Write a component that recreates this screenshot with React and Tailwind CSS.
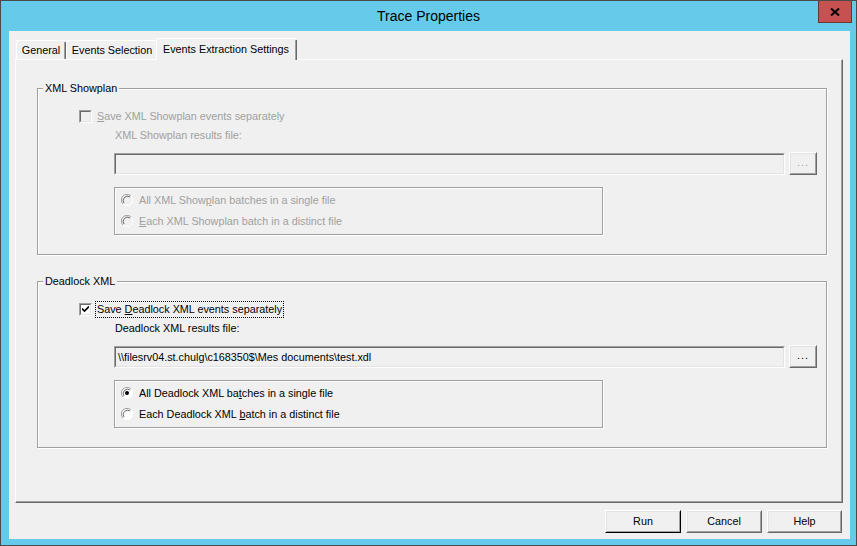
import React from 'react';

const Checkbox = ({ checked, disabled }) => (
  <div className="w-[13px] h-[13px] shrink-0 border border-t-[#a0a0a0] border-l-[#a0a0a0] border-r-white border-b-white">
    <div
      className={`w-full h-full border border-t-[#696969] border-l-[#696969] border-r-[#e3e3e3] border-b-[#e3e3e3] flex items-center justify-center ${
        disabled ? 'bg-[#f0f0f0]' : 'bg-white'
      }`}
    >
      {checked && (
        <svg width="7" height="7" viewBox="0 0 7 7">
          <path d="M0 2.5 L2.5 5 L7 0.5" stroke="#000" strokeWidth="1.6" fill="none" />
        </svg>
      )}
    </div>
  </div>
);

const Radio = ({ checked, disabled }) => (
  <svg width="12" height="12" viewBox="0 0 12 12" className="shrink-0">
    <circle cx="6" cy="6" r="5.5" fill={disabled ? '#f0f0f0' : '#fff'} />
    <path d="M10 2 A5.5 5.5 0 0 0 2 10" stroke="#a0a0a0" strokeWidth="1" fill="none" />
    <path d="M9 3 A4.3 4.3 0 0 0 3 9" stroke="#696969" strokeWidth="1" fill="none" />
    <path d="M2 10 A5.5 5.5 0 0 0 10 2" stroke="#fff" strokeWidth="1" fill="none" />
    {checked && <circle cx="6" cy="6" r="2" fill="#000" />}
  </svg>
);

const Sunken = ({ className, children }) => (
  <div className={`border border-t-[#a0a0a0] border-l-[#a0a0a0] border-r-white border-b-white ${className}`}>
    <div className="w-full h-full border border-t-[#696969] border-l-[#696969] border-r-[#e3e3e3] border-b-[#e3e3e3] bg-[#f0f0f0] flex items-center">
      {children}
    </div>
  </div>
);

const Button = ({ children, className = '', disabled }) => (
  <div className={`border border-t-white border-l-white border-r-[#696969] border-b-[#696969] ${className}`}>
    <div
      className={`w-full h-full border border-t-[#e3e3e3] border-l-[#e3e3e3] border-r-[#a0a0a0] border-b-[#a0a0a0] bg-[#f0f0f0] flex items-center justify-center ${
        disabled ? 'text-[#a0a0a0]' : 'text-black'
      }`}
    >
      {children}
    </div>
  </div>
);

const GroupBox = ({ title, children }) => (
  <div className="relative h-[167px] border border-[#a0a0a0] shadow-[inset_1px_1px_0_#fff,1px_1px_0_#fff]">
    <span className="absolute -top-[7px] left-[5px] px-[2px] h-[13px] leading-[13px] bg-[#f0f0f0]">{title}</span>
    {children}
  </div>
);

const ExportSection = ({ title, kind, enabled, path }) => {
  const txt = enabled ? 'text-black' : 'text-[#a0a0a0]';
  return (
    <GroupBox title={title}>
      <div className={`flex flex-col pl-[41px] pt-[21px] ${txt}`}>
        <div className="flex items-center h-[13px]">
          <Checkbox checked={enabled} disabled={!enabled} />
          <span
            className={`ml-[3px] h-[17px] leading-[15px] px-[1px] border border-dotted ${
              enabled ? 'border-black' : 'border-transparent'
            }`}
          >
            {kind === 'xml' ? (
              <>
                <u>S</u>ave XML Showplan events separately
              </>
            ) : (
              <>
                Save <u>D</u>eadlock XML events separately
              </>
            )}
          </span>
        </div>
        <div className="ml-[36px] mt-[6px] h-[13px] leading-[13px]">
          {kind === 'xml' ? 'XML Showplan results file:' : 'Deadlock XML results file:'}
        </div>
        <div className="flex items-start ml-[35px] mt-[10px]">
          <Sunken className="mt-[1px] w-[671px] h-[22px]">
            <span className="pl-[2px] text-black whitespace-nowrap">{path}</span>
          </Sunken>
          <Button className="ml-[4px] w-[28px] h-[23px]" disabled={!enabled}>
            <span className="-mt-[2px] tracking-[1px]">...</span>
          </Button>
        </div>
        <div className="ml-[35px] mt-[12px] w-[489px] h-[48px] border border-[#a0a0a0] shadow-[inset_1px_1px_0_#fff,1px_1px_0_#fff] flex flex-col pl-[6px] pt-[6px] gap-[9px]">
          <div className="flex items-center h-[12px]">
            <Radio checked={enabled} disabled={!enabled} />
            <span className="ml-[6px] leading-[13px]">
              {kind === 'xml' ? (
                <>
                  All XML Show<u>p</u>lan batches in a single file
                </>
              ) : (
                <>
                  All Deadlock XML ba<u>t</u>ches in a single file
                </>
              )}
            </span>
          </div>
          <div className="flex items-center h-[12px]">
            <Radio checked={false} disabled={!enabled} />
            <span className="ml-[6px] leading-[13px]">
              {kind === 'xml' ? (
                <>
                  <u>E</u>ach XML Showplan batch in a distinct file
                </>
              ) : (
                <>
                  Each Deadlock XML <u>b</u>atch in a distinct file
                </>
              )}
            </span>
          </div>
        </div>
      </div>
    </GroupBox>
  );
};

const Tab = ({ label, active, className = '' }) => (
  <div
    className={`relative flex items-center justify-center bg-[#f0f0f0] border-t border-l border-white rounded-tl-[2px] rounded-tr-[2px] ${
      active ? 'h-[22px] -mb-[1px] z-10 -ml-[2px]' : 'h-[19px]'
    } ${className}`}
  >
    <div className="absolute right-0 top-[1px] bottom-0 w-[2px] border-r border-[#696969] bg-[#a0a0a0]" />
    <span className={active ? 'pr-[2px]' : 'pr-[1px]'}>{label}</span>
  </div>
);

export default function App() {
  const deadlockPath = '\\\\filesrv04.st.chulg\\c168350$\\Mes documents\\test.xdl';

  return (
    <div className="w-[857px] h-[546px] bg-[#66cbea] border border-[#4b4b4b] flex flex-col font-['Liberation_Sans',Arial,sans-serif] text-[10.8px] text-black select-none">
      {/* Title bar */}
      <div className="relative h-[30px] flex items-center justify-center shrink-0">
        <span className="text-[14px] text-black">Trace Properties</span>
        <div className="absolute top-0 right-[4px] w-[34px] h-[22px] bg-[#c75050] border border-[#6e3333] border-t-0 flex items-center justify-center">
          <svg width="10" height="8" viewBox="0 0 10 8">
            <path d="M1 0.5 L9 7.5 M9 0.5 L1 7.5" stroke="#000" strokeWidth="2" />
          </svg>
        </div>
      </div>

      {/* Client area */}
      <div className="flex-1 ml-[8px] mr-[6px] mb-[6px] bg-[#f0f0f0] flex flex-col pt-[7px] pl-[6px] pr-[7px]">
        <div className="flex items-end h-[21px] pl-[1px] shrink-0">
          <Tab label="General" className="w-[50px]" />
          <Tab label="Events Selection" className="w-[92px]" />
          <Tab label="Events Extraction Settings" active className="w-[141px]" />
        </div>

        <div className="h-[444px] border-t border-l border-white border-r border-b border-r-[#696969] border-b-[#696969] shrink-0">
          <div className="w-full h-full border-r border-b border-[#a0a0a0] flex flex-col pl-[21px] pr-[14px] pt-[28px] gap-[26px]">
            <ExportSection title="XML Showplan" kind="xml" enabled={false} path="" />
            <ExportSection title="Deadlock XML" kind="deadlock" enabled path={deadlockPath} />
          </div>
        </div>

        <div className="flex justify-end gap-[5px] mt-[7px] mr-[1px]">
          <Button className="w-[76px] h-[23px] !border-r-[#000] !border-b-[#000]">Run</Button>
          <Button className="w-[76px] h-[23px]">Cancel</Button>
          <Button className="w-[75px] h-[23px]">Help</Button>
        </div>
      </div>
    </div>
  );
}
